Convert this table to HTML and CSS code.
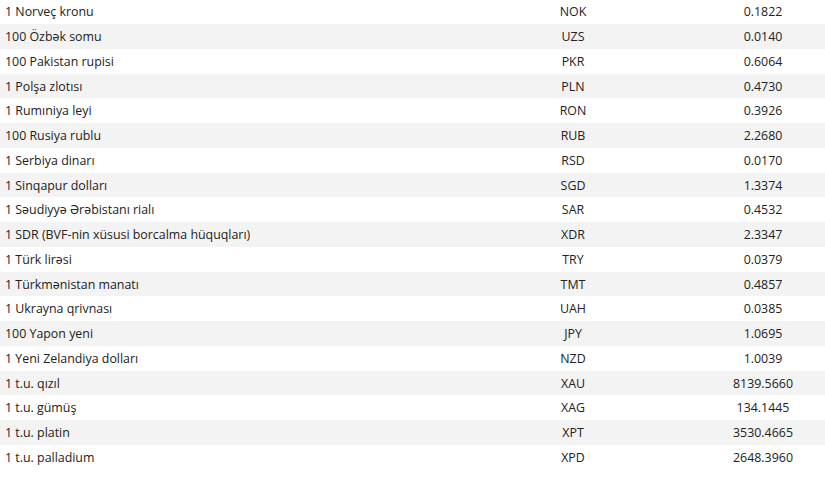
FILE: index.html
```html
<!DOCTYPE html>
<html lang="az">
<head>
<meta charset="utf-8">
<title>Məzənnələr</title>
<link rel="stylesheet" href="styles.css">
</head>
<body>
<table class="rates">
<tbody>
<tr><td class="name">1 Norveç kronu</td><td class="code">NOK</td><td class="val">0.1822</td></tr>
<tr><td class="name">100 Özbək somu</td><td class="code">UZS</td><td class="val">0.0140</td></tr>
<tr><td class="name">100 Pakistan rupisi</td><td class="code">PKR</td><td class="val">0.6064</td></tr>
<tr><td class="name">1 Polşa zlotısı</td><td class="code">PLN</td><td class="val">0.4730</td></tr>
<tr><td class="name">1 Rumıniya leyi</td><td class="code">RON</td><td class="val">0.3926</td></tr>
<tr><td class="name">100 Rusiya rublu</td><td class="code">RUB</td><td class="val">2.2680</td></tr>
<tr><td class="name">1 Serbiya dinarı</td><td class="code">RSD</td><td class="val">0.0170</td></tr>
<tr><td class="name">1 Sinqapur dolları</td><td class="code">SGD</td><td class="val">1.3374</td></tr>
<tr><td class="name">1 Səudiyyə Ərəbistanı rialı</td><td class="code">SAR</td><td class="val">0.4532</td></tr>
<tr><td class="name">1 SDR (BVF-nin xüsusi borcalma hüquqları)</td><td class="code">XDR</td><td class="val">2.3347</td></tr>
<tr><td class="name">1 Türk lirəsi</td><td class="code">TRY</td><td class="val">0.0379</td></tr>
<tr><td class="name">1 Türkmənistan manatı</td><td class="code">TMT</td><td class="val">0.4857</td></tr>
<tr><td class="name">1 Ukrayna qrivnası</td><td class="code">UAH</td><td class="val">0.0385</td></tr>
<tr><td class="name">100 Yapon yeni</td><td class="code">JPY</td><td class="val">1.0695</td></tr>
<tr><td class="name">1 Yeni Zelandiya dolları</td><td class="code">NZD</td><td class="val">1.0039</td></tr>
<tr><td class="name">1 t.u. qızıl</td><td class="code">XAU</td><td class="val">8139.5660</td></tr>
<tr><td class="name">1 t.u. gümüş</td><td class="code">XAG</td><td class="val">134.1445</td></tr>
<tr><td class="name">1 t.u. platin</td><td class="code">XPT</td><td class="val">3530.4665</td></tr>
<tr><td class="name">1 t.u. palladium</td><td class="code">XPD</td><td class="val">2648.3960</td></tr>
</tbody>
</table>
</body>
</html>
```
FILE: styles.css
```css
html, body {
  margin: 0;
  padding: 0;
  background: #fff;
}
body {
  font-family: "Open Sans", "Noto Sans", sans-serif;
  font-size: 12.4px;
  color: #222;
}
.rates {
  width: 825px;
  margin-top: -0.6px;
  border-collapse: collapse;
  table-layout: fixed;
}
.rates tr {
  height: 24.75px;
}
.rates tr:nth-child(even) {
  background: #f3f3f3;
}
.rates td {
  padding: 0 5px;
  vertical-align: middle;
  white-space: nowrap;
}
.rates .name {
  width: 435px;
  text-align: left;
}
.rates .code {
  width: 246px;
  text-align: center;
}
.rates .val {
  text-align: center;
}
```
